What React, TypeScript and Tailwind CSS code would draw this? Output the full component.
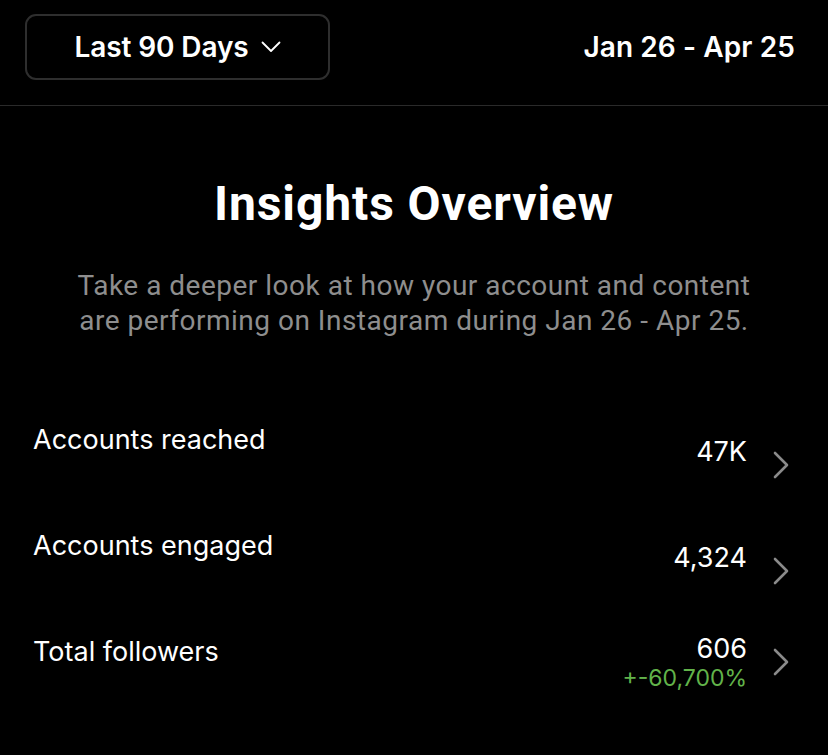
const rows = [
  { label: 'Accounts reached', value: '47K', shift: 'mt-[13px]' },
  { label: 'Accounts engaged', value: '4,324', shift: 'mt-[13px]' },
  { label: 'Total followers', value: '606', change: '+-60,700%', shift: '-mt-[2px]' },
]

function Chevron() {
  return (
    <svg width="18" height="28" viewBox="0 0 18 28" fill="none" className="shrink-0">
      <path d="M3 2l12 12L3 26" stroke="#8a8a8a" strokeWidth="2.6" strokeLinecap="round" strokeLinejoin="round" />
    </svg>
  )
}

export default function App() {
  return (
    <div className="w-[828px] h-[755px] bg-black text-white overflow-hidden font-['Inter','Liberation_Sans',sans-serif]">
      <div className="h-[106px] border-b border-[#2a2a2a] flex items-start justify-between pl-[25px] pr-[33px] pt-[14px]">
        <button className="w-[305px] h-[66px] rounded-[11px] border-2 border-[#2e2e2e] flex items-center justify-center gap-[12px] text-[28px] font-semibold tracking-[-0.1px]">
          Last 90 Days
          <svg width="20" height="12" viewBox="0 0 20 12" fill="none">
            <path d="M1.5 1.5L10 10l8.5-8.5" stroke="white" strokeWidth="1.8" strokeLinecap="round" strokeLinejoin="round" />
          </svg>
        </button>
        <div className="h-[66px] flex items-center text-[28px] font-semibold tracking-[0.1px]">Jan 26 - Apr 25</div>
      </div>

      <div className="pt-[70px] text-center font-['Roboto',sans-serif]">
        <h1 className="text-[48px] font-bold leading-[56px] tracking-[0.9px]">Insights Overview</h1>
        <p className="mt-[36px] text-[28px] leading-[35px] text-[#8e8e8e] tracking-[0.5px]">
          Take a deeper look at how your account and content
          <br />
          are performing on Instagram during Jan 26 - Apr 25.
        </p>
      </div>

      <div className="mt-[85px] pl-[33px] pr-[38px]">
        {rows.map((r) => (
          <div key={r.label} className="h-[106px] flex items-start justify-between">
            <div className="text-[27px] leading-[34px]">{r.label}</div>
            <div className={`flex items-center gap-[25px] ${r.shift}`}>
              <div className="text-right">
                <div className="text-[27px] leading-[32px]">{r.value}</div>
                <div className="h-[26px] text-[23px] leading-[26px] text-[#62b34a]">{r.change}</div>
              </div>
              <Chevron />
            </div>
          </div>
        ))}
      </div>
    </div>
  )
}
